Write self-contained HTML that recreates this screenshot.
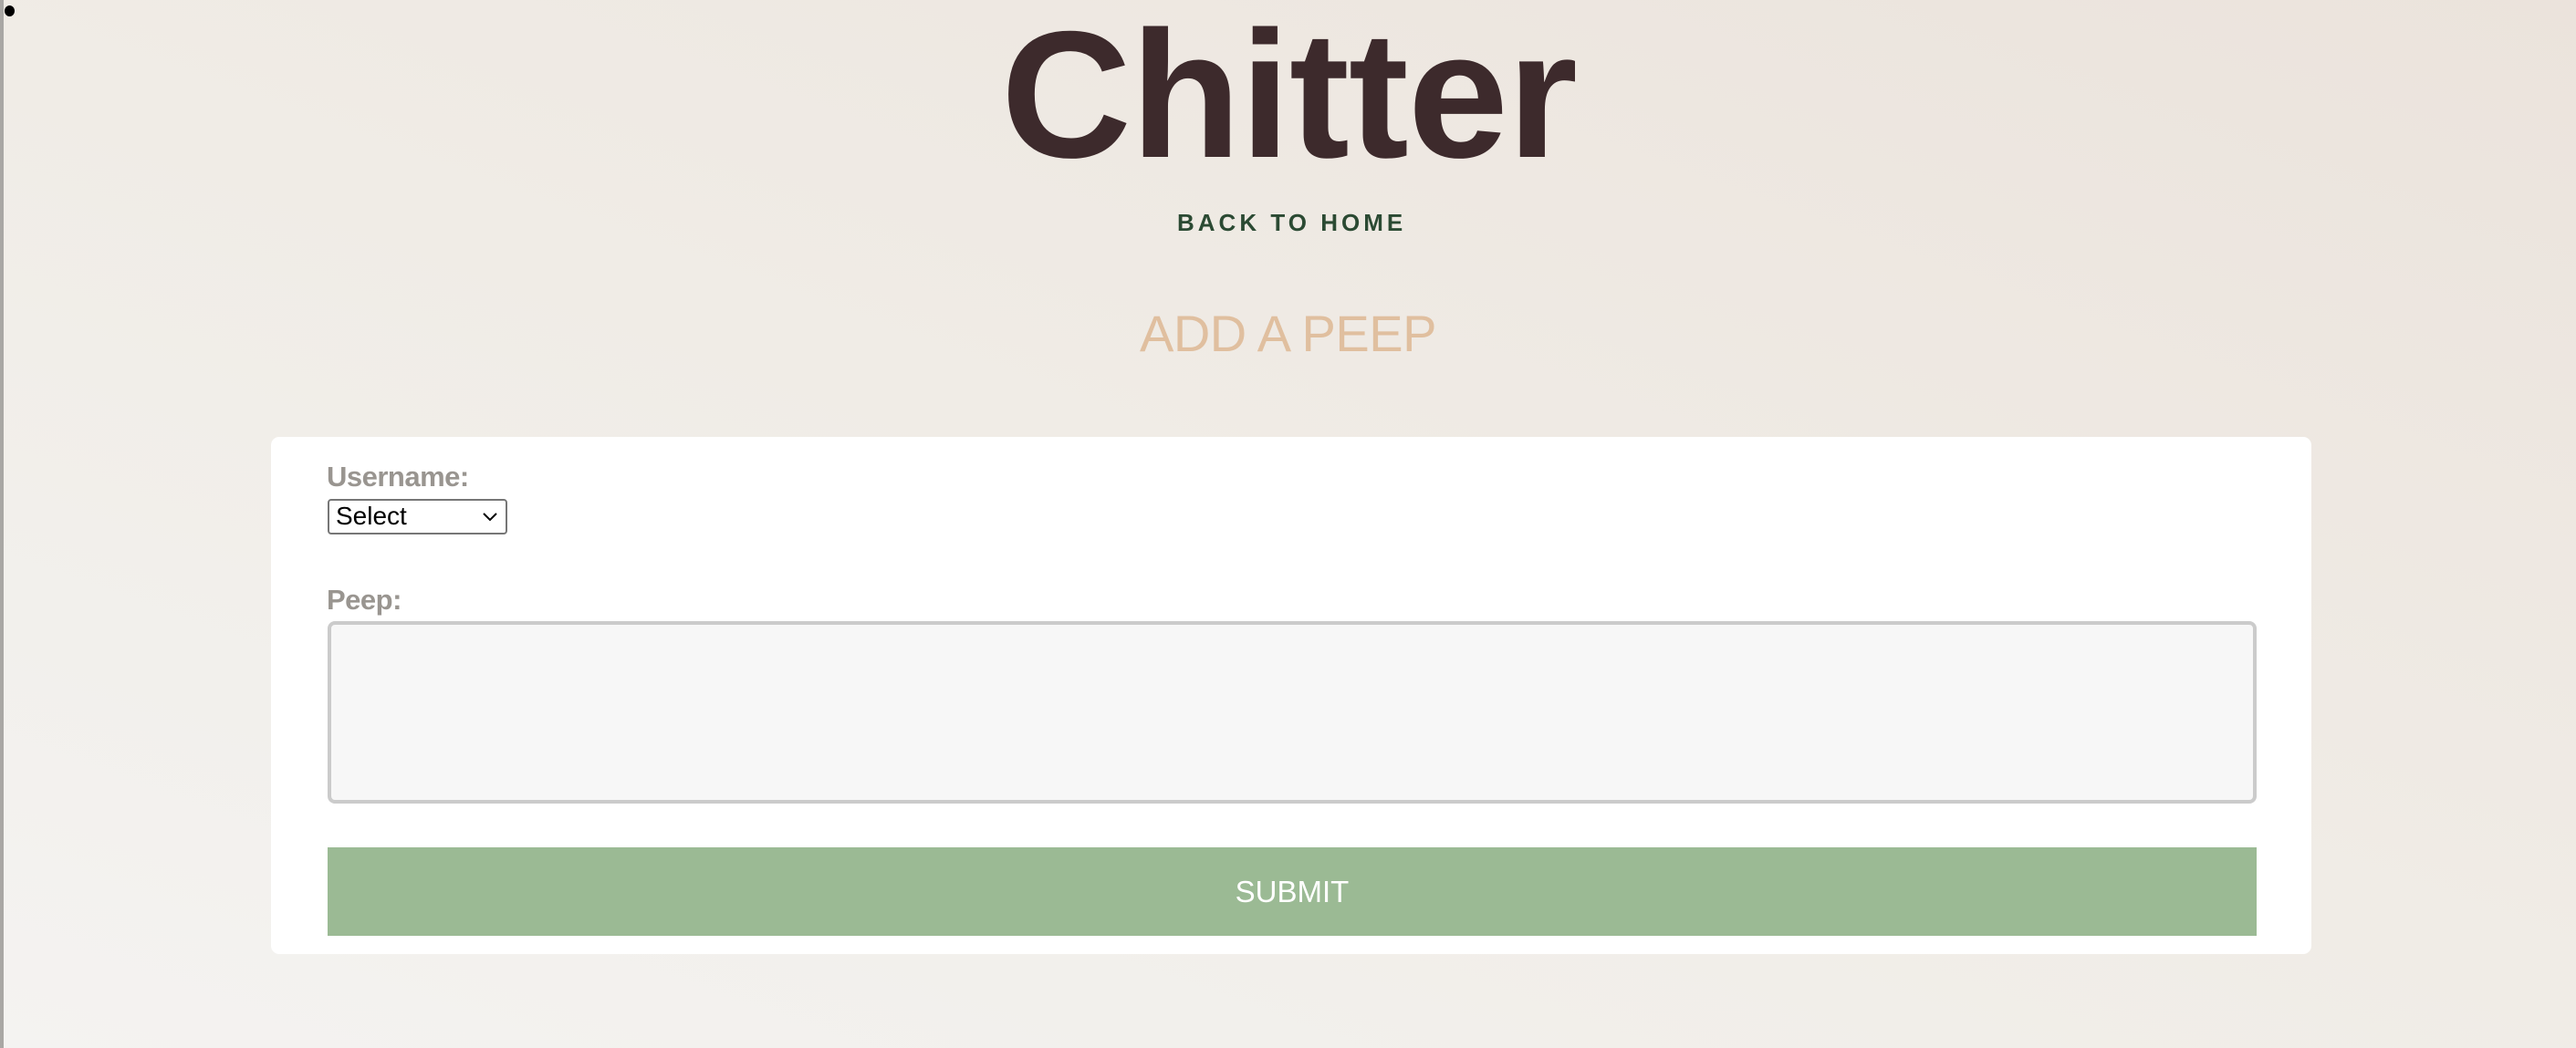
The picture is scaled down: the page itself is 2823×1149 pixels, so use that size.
<!DOCTYPE html>
<html><head><meta charset="utf-8"><style>
html,body{margin:0;padding:0;width:2823px;height:1149px;overflow:hidden}
body{background:linear-gradient(20deg,#f4f3f1 0%,#f0ece6 50%,#ebe3dc 100%);font-family:"Liberation Sans",Arial,sans-serif;position:relative}
.vl{position:absolute;left:0;top:0;width:4px;height:1149px;background:#a9a7a4}
.dot{position:absolute;left:5px;top:6px;width:11px;height:12px;border-radius:50%;background:#000}
.t{position:absolute;white-space:nowrap}
h1{position:absolute;margin:0;left:1097px;top:5px;font-size:198px;font-weight:bold;color:#3d2a2c;line-height:1;letter-spacing:-1px}
.back{left:1290px;top:229px;font-size:26px;font-weight:bold;color:#2b4a33;letter-spacing:4px}
.add{left:1249px;top:333px;font-size:56px;color:#e0bf9f;letter-spacing:-0.5px}
.card{position:absolute;left:297px;top:479px;width:2236px;height:567px;background:#fff;border-radius:9px}
.lbl{font-size:31px;font-weight:bold;color:#999590;letter-spacing:-0.5px}
.sel{position:absolute;left:359px;top:547px;width:193px;height:35px;border:2px solid #767676;border-radius:4px;background:#fff;font-size:28px;color:#000}
.sel span{position:absolute;left:7px;top:1px}
.ta{position:absolute;left:359px;top:681px;width:2106px;height:192px;border:4px solid #cbcbcb;border-radius:8px;background:#f7f7f7}
.btn{position:absolute;left:359px;top:929px;width:2114px;height:97px;background:#9bba94;color:#fff;font-size:33px;text-align:center;line-height:97px}
</style></head><body>
<div class="vl"></div><div class="dot"></div>
<h1>Chitter</h1>
<div class="t back">BACK TO HOME</div>
<div class="t add">ADD A PEEP</div>
<div class="card"></div>
<div class="t lbl" style="left:358px;top:505px">Username:</div>
<div class="sel"><span>Select</span><svg style="position:absolute;right:8px;top:12px" width="18" height="12" viewBox="0 0 18 12"><path d="M2 2 L9 9 L16 2" fill="none" stroke="#000" stroke-width="2"/></svg></div>
<div class="t lbl" style="left:358px;top:640px">Peep:</div>
<div class="ta"></div>
<div class="btn">SUBMIT</div>
</body></html>
